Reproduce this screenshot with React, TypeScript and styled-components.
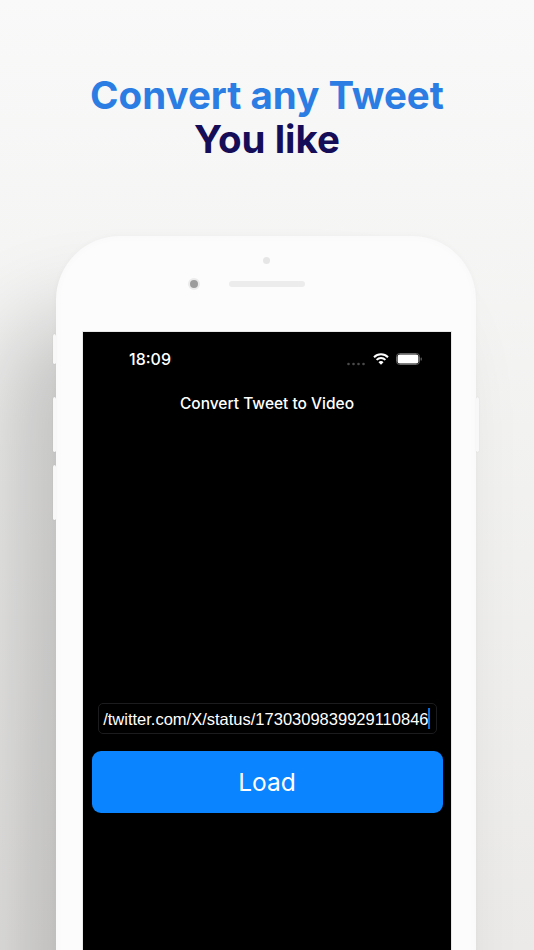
import React from 'react';
import styled, { createGlobalStyle } from 'styled-components';

const GlobalStyle = createGlobalStyle`
  html, body {
    margin: 0;
    padding: 0;
    background: #f1f0ef;
  }
`;

const Page = styled.div`
  width: 534px;
  height: 950px;
  overflow: hidden;
  box-sizing: border-box;
  padding-top: 73px;
  display: flex;
  flex-direction: column;
  align-items: center;
  background: linear-gradient(180deg, #f9f9f9 0%, #f2f2f1 45%, #ebeae8 100%);
`;

const Heading = styled.h1`
  margin: 0 0 75px;
  font-family: 'Inter', 'Liberation Sans', sans-serif;
  font-size: 38.5px;
  line-height: 44px;
  font-weight: 700;
  text-align: center;
`;

const HeadingLine = styled.div<{ $dark?: boolean }>`
  color: ${(p) => (p.$dark ? '#150d57' : '#2b7de4')};
  white-space: nowrap;
`;

const Phone = styled.div`
  position: relative;
  flex: none;
  width: 420px;
  height: 800px;
  margin-right: 2px;
  box-sizing: border-box;
  padding: 96px 25px 0 27px;
  border-radius: 64px 64px 0 0;
  background: #fcfcfc;
  box-shadow: -50px 80px 90px rgba(0, 0, 0, 0.2), 0 0 6px rgba(0, 0, 0, 0.03),
    inset 0 0 10px rgba(0, 0, 0, 0.025);
`;

const SideButton = styled.div<{ $top: number; $height: number; $right?: boolean }>`
  position: absolute;
  top: ${(p) => p.$top}px;
  ${(p) => (p.$right ? 'right: -3px;' : 'left: -3px;')}
  width: 3px;
  height: ${(p) => p.$height}px;
  background: #f8f8f8;
  border-radius: 2px;
  box-shadow: 0 0 1px rgba(0, 0, 0, 0.15);
`;

const Camera = styled.div`
  position: absolute;
  top: 42px;
  left: 132px;
  width: 8px;
  height: 8px;
  border-radius: 50%;
  background: #9c9c9c;
  border: 2px solid #ebebeb;
`;

const Speaker = styled.div`
  position: absolute;
  top: 45px;
  left: 173px;
  width: 76px;
  height: 6px;
  border-radius: 3px;
  background: #ececec;
`;

const Sensor = styled.div`
  position: absolute;
  top: 21px;
  left: 207px;
  width: 7px;
  height: 7px;
  border-radius: 50%;
  background: #e6e6e6;
`;

const Screen = styled.div`
  height: 700px;
  background: #000;
  outline: 1px solid #e8e8e8;
  display: flex;
  flex-direction: column;
  align-items: stretch;
  font-family: 'Inter', 'Liberation Sans', sans-serif;
  color: #fff;
`;

const StatusBar = styled.div`
  height: 54px;
  box-sizing: border-box;
  padding: 0 29px 0 46px;
  display: flex;
  justify-content: space-between;
  align-items: center;
`;

const Time = styled.span`
  font-size: 16px;
  font-weight: 500;
  line-height: 22px;
`;

const StatusIcons = styled.div`
  display: flex;
  align-items: center;
  gap: 7px;
`;

const SignalDots = styled.svg`
  margin-top: 10px;
`;

const Title = styled.div`
  margin-top: 8px;
  text-align: center;
  font-size: 15.5px;
  line-height: 20px;
  font-weight: 500;
`;

const Form = styled.div`
  margin-top: 289px;
  padding: 0 9px;
  display: flex;
  flex-direction: column;
  align-items: center;
  gap: 17px;
`;

const UrlField = styled.div`
  width: 339px;
  height: 31px;
  box-sizing: border-box;
  padding: 0 6px 0 4px;
  border: 1px solid #1c1c1e;
  border-radius: 5px;
  display: flex;
  justify-content: flex-end;
  align-items: center;
`;

const UrlText = styled.span`
  font-family: 'Liberation Sans', sans-serif;
  font-size: 16.5px;
  line-height: 22px;
  white-space: nowrap;
`;

const Caret = styled.span`
  flex: none;
  width: 2px;
  height: 21px;
  margin-left: -1px;
  background: #0a6fe0;
`;

const LoadButton = styled.button`
  width: 351px;
  height: 62px;
  padding: 0;
  border: none;
  border-radius: 9px;
  background: #0a84ff;
  color: #fff;
  font-family: inherit;
  font-size: 24.5px;
  font-weight: 400;
`;

const App = () => {
  return (
    <Page>
      <GlobalStyle />
      <Heading>
        <HeadingLine>Convert any Tweet</HeadingLine>
        <HeadingLine $dark>You like</HeadingLine>
      </Heading>
      <Phone>
        <SideButton $top={98} $height={30} />
        <SideButton $top={161} $height={55} />
        <SideButton $top={229} $height={55} />
        <SideButton $top={161} $height={55} $right />
        <Sensor />
        <Camera />
        <Speaker />
        <Screen>
          <StatusBar>
            <Time>18:09</Time>
            <StatusIcons>
              <SignalDots width="19" height="4" viewBox="0 0 19 4">
                <circle cx="1.5" cy="2" r="1.3" fill="#4a4a4a" />
                <circle cx="6.5" cy="2" r="1.3" fill="#4a4a4a" />
                <circle cx="11.5" cy="2" r="1.3" fill="#4a4a4a" />
                <circle cx="16.5" cy="2" r="1.3" fill="#4a4a4a" />
              </SignalDots>
              <svg width="16" height="12" viewBox="0 0 16 12">
                <path d="M1 4.2a10 10 0 0 1 14 0" fill="none" stroke="#fff" strokeWidth="2" />
                <path d="M3.6 6.9a6.3 6.3 0 0 1 8.8 0" fill="none" stroke="#fff" strokeWidth="2" />
                <path d="M8 11.8 5.5 9.2a3.4 3.4 0 0 1 5 0z" fill="#fff" />
              </svg>
              <svg width="26" height="12" viewBox="0 0 26 12">
                <rect x="0.5" y="0.5" width="23" height="11" rx="3.2" fill="none" stroke="#666" />
                <rect x="1.6" y="1.6" width="20.8" height="8.8" rx="2.2" fill="#fff" />
                <rect x="24.6" y="4.4" width="1.2" height="3.2" rx="0.6" fill="#666" />
              </svg>
            </StatusIcons>
          </StatusBar>
          <Title>Convert Tweet to Video</Title>
          <Form>
            <UrlField>
              <UrlText>/twitter.com/X/status/1730309839929110846</UrlText>
              <Caret />
            </UrlField>
            <LoadButton>Load</LoadButton>
          </Form>
        </Screen>
      </Phone>
    </Page>
  );
};

export default App;
